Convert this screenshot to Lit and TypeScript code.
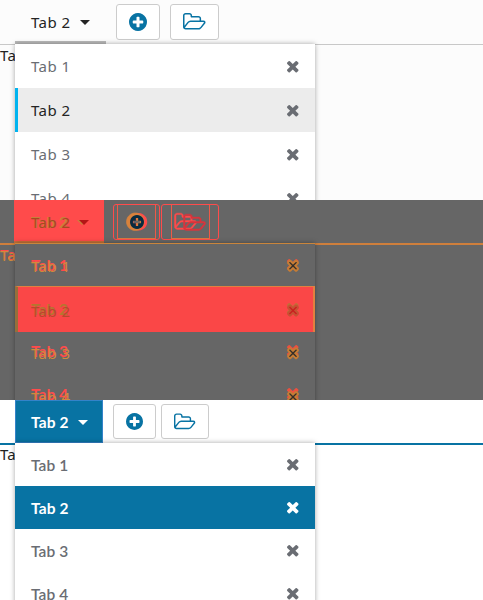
import { LitElement, html, css, svg } from "lit";
import { customElement, property } from "lit/decorators.js";

const PLUS = "M1344 960v-128q0-26-19-45t-45-19h-256v-256q0-26-19-45t-45-19h-128q-26 0-45 19t-19 45v256h-256q-26 0-45 19t-19 45v128q0 26 19 45t45 19h256v256q0 26 19 45t45 19h128q26 0 45-19t19-45v-256h256q26 0 45-19t19-45zm320-64q0 209-103 385.500t-279.500 279.500-385.500 103-385.500-103-279.500-279.500-103-385.500 103-385.500 279.500-279.500 385.500-103 385.500 103 279.500 279.500 103 385.500z";
const FOLDER = "M1845 931q0-35-53-35h-1088q-40 0-85.500 21.500t-71.500 52.500l-294 363q-18 24-18 40 0 35 53 35h1088q40 0 86-22t71-53l294-363q18-22 18-39zm-1141-163h768v-160q0-40-28-68t-68-28h-576q-40 0-68-28t-28-68v-64q0-40-28-68t-68-28h-320q-40 0-68 28t-28 68v853l256-315q44-53 116-87.500t140-34.500zm1269 163q0 62-46 120l-295 363q-43 53-116 87.500t-140 34.500h-1088q-92 0-158-66t-66-158v-960q0-92 66-158t158-66h320q92 0 158 66t66 158v32h544q92 0 158 66t66 158v160h192q54 0 99 24.500t67 70.500q15 32 15 68z";
const CLOSE = "M1490 1322q0 40-28 68l-136 136q-28 28-68 28t-68-28l-294-294-294 294q-28 28-68 28t-68-28l-136-136q-28-28-28-68t28-68l294-294-294-294q-28-28-28-68t28-68l136-136q28-28 68-28t68 28l294 294 294-294q28-28 68-28t68 28l136 136q28 28 28 68t-28 68l-294 294 294 294q28 28 28 68z";

const boxes = { plus: "128 128 1536 1536", folder: "64 256 1909 1280", close: "302 366 1188 1188" };
const paths = { plus: PLUS, folder: FOLDER, close: CLOSE };
type Icon = keyof typeof paths;

const glyph = (name: Icon, layer = "") =>
  html`<svg class="icon ${name} ${layer}" viewBox=${boxes[name]}>${svg`<path d=${paths[name]} />`}</svg>`;

@customElement("tab-panel")
export class TabPanel extends LitElement {
  @property() theme = "light";

  static styles = css`
    :host { display: block; height: 200px; overflow: hidden; font: 15px "Noto Sans", "Open Sans", sans-serif; }
    .panel { display: grid; grid-template-rows: var(--bar) 1fr; height: 200px; }
    .bar { display: flex; align-items: flex-start; box-sizing: border-box; padding-left: 15px; }
    .tab { display: flex; align-items: center; box-sizing: border-box; height: var(--tab-h); width: var(--tab-w); padding-left: 16px; color: var(--tab-ink); }
    .stack { display: inline-grid; align-items: center; justify-items: start; }
    .stack.center { justify-items: center; }
    .stack > * { grid-area: 1 / 1; }
    .caret { width: 0; height: 0; border: 5.5px solid transparent; border-top: 5px solid currentColor; border-bottom: 0; margin-left: var(--caret-gap); margin-top: 1px; }
    .btn { display: flex; align-items: center; justify-content: center; box-sizing: border-box; height: 36px; margin-top: 4px; border: 1px solid #ccc; border-radius: 3px; background: #fff; color: #0873a3; }
    .icon { display: block; fill: currentColor; overflow: visible; }
    .icon.plus { width: var(--plus); height: var(--plus); }
    .icon.folder { width: var(--folder); height: 16px; }
    .icon.close { width: 11.5px; height: 11.5px; }
    .body { display: grid; grid-template-columns: 15px 300px 1fr; }
    .edge { height: 27px; overflow: hidden; white-space: nowrap; border-top: var(--rule-w) solid var(--rule); color: #222; line-height: 20px; box-sizing: border-box; }
    .rest { border-top: var(--rule-w) solid var(--rule); }
    .menu { background: var(--menu); box-shadow: 0 0 5px rgba(0, 0, 0, .35); color: #6a6d73; z-index: 1; }
    .row { display: flex; align-items: center; justify-content: space-between; box-sizing: border-box; height: var(--row); padding: 0 16.5px 0 16px; }
    .label { line-height: 20px; letter-spacing: var(--track); white-space: nowrap; }

    .light { --bar: 44px; --tab-h: 44px; --tab-w: 91px; --tab-ink: #242424; --caret-gap: 9.5px; --plus: 18px; --folder: 22.5px; --rule-w: 1px; --rule: #c8c8c8; --menu: #fff; --row: 44px; --track: .45px; background: #fcfcfc; }
    .light .tab { border-bottom: 3px solid #bababa; padding-top: 3px; }
    .light .b1 { width: 44px; margin-left: 10px; }
    .light .b2 { width: 49px; margin-left: 10px; }
    .light .row .icon { margin-top: 1px; }
    .light .row .label { margin-top: -1px; }
    .light .on { background: #ececec; border-left: 3px solid #00b3ef; padding-left: 13px; color: #242424; }
    .light .on .icon { color: #6a6d73; }

    .blue { --bar: 43px; --tab-h: 43px; --tab-w: 88px; --tab-ink: #fff; --caret-gap: 9px; --plus: 17px; --folder: 21.3px; --rule-w: 2px; --rule: #0873a3; --menu: #fff; --row: 43px; --track: .1px; background: #fff; }
    .blue .tab { background: #0873a3; border: 1px solid #3483c9; padding-left: 15px; }
    .blue .btn { height: 35px; }
    .blue .b1 { width: 43px; margin-left: 10px; }
    .blue .b2 { width: 48px; margin-left: 5px; }
    .blue .label { font-family: Lato, "Noto Sans", sans-serif; font-size: 15.5px; font-weight: 600; }
    .blue .edge { line-height: 18px; }
    .blue .edge .label { font: 15px/18px "Noto Sans", sans-serif; }
    .blue .on .label, .blue .tab .label { font-weight: 700; }
    .blue .on { background: #0873a3; color: #fff; }

    .diff { --bar: 43px; --tab-h: 43px; --tab-w: 90px; --tab-ink: #b36022; --caret-gap: 8px; --plus: 17.5px; --folder: 22px; --rule-w: 2px; --rule: #cf7f3c; --menu: #666; --row: 43px; --track: .45px; background: #666; }
    .diff .bar { padding-left: 14px; }
    .diff .tab { padding-left: 17px; background: #ff4b4b; border-bottom: 2px solid #c57038; padding-top: 2px; }
    .diff .caret { color: #b41515; border-top-color: #b41515; filter: drop-shadow(-1.5px 0 0 #c8823c); }
    .diff .btn { background: none; border-color: #ff4b4b; }
    .diff .b1 { width: 47px; margin-left: 9px; }
    .diff .b2 { width: 58px; margin-left: 1px; }
    .diff .inner { display: flex; align-items: center; justify-content: center; height: 34px; box-sizing: border-box; border: solid #ee5946; border-width: 0 1px 1px; border-bottom-color: #d9783f; }
    .diff .b1 .inner { width: 39px; }
    .diff .b2 .inner { width: 39px; }
    .diff .menu { border-top: 1px solid #c9853b; margin-bottom: -1px; }
    .diff .row { transform: translateY(-1px); }
    .diff .on { height: 46px; margin-bottom: -3px; background: #fa4747; border: solid #e2803f; border-width: 1px 2px 0 3px; border-left-color: #956f3b; padding: 0 14.5px 2px 13px; }
    .label.under { color: #ff4b4b; font-family: Lato, sans-serif; font-size: 15.5px; font-weight: 700; letter-spacing: 0; }
    .label.over { color: #d08a3d; transform: translateY(var(--drift)); }
    .edge .label.under { font: 15px/20px "Noto Sans", sans-serif; transform: translateY(-1px); }
    .icon.folder.under { fill: #ff4b4b; stroke: #ff4b4b; stroke-width: 40; transform: translateX(-4.5px); }
    .icon.folder.over { fill: #d9343c; stroke: #d9343c; stroke-width: 40; transform: translate(4.5px, 1px); }
    .icon.plus.under { fill: #d8823c; stroke: #d8823c; stroke-width: 60; transform: translateX(-1.5px); }
    .icon.plus.base { fill: #ff4b4b; transform: translateX(1.75px); }
    .icon.plus.over { fill: #082b40; width: 14px; height: 14px; transform: translateX(0); }
    .icon.close.under { fill: #ed503f; }
    .icon.close.over { width: 10px; height: 10px; transform: translate(0, var(--drift)); fill: #342e29; stroke: #c57c35; stroke-width: 220; }
    .on .icon.close.under { fill: #bd7337; }
    .on .icon.close.over { fill: #c91f1f; stroke: #c75033; }
    .on .label.under { color: #b7752f; }
    .on .label.over { color: #b9482c; }
    .tab .label.over { color: #a94722; }
    .tab .label.under { color: #c5803a; }
  `;

  private get diff() { return this.theme === "diff"; }

  private text(t: string) {
    return this.diff
      ? html`<span class="stack"><span class="label under">${t}</span><span class="label over" aria-hidden="true">${t}</span></span>`
      : html`<span class="label">${t}</span>`;
  }

  private icon(n: Icon) {
    return this.diff
      ? html`<span class="stack center">${n === "plus" ? glyph(n, "base") : ""}${glyph(n, "under")}${glyph(n, "over")}</span>`
      : glyph(n);
  }

  private button(n: Icon, cls: string) {
    return html`<div class="btn ${cls}">${this.diff ? html`<div class="inner">${this.icon(n)}</div>` : this.icon(n)}</div>`;
  }

  render() {
    return html`<div class="panel ${this.theme}">
      <div class="bar">
        <div class="tab" style="--drift:0px">${this.text("Tab 2")}<span class="caret"></span></div>
        ${this.button("plus", "b1")}${this.button("folder", "b2")}
      </div>
      <div class="body">
        <div class="edge" style="--drift:0px">${this.text("Ta")}</div>
        <div class="menu">
          ${[1, 2, 3, 4].map((n) => html`<div class="row ${n === 2 ? "on" : ""}" style="--drift:${n * 0.75}px">${this.text(`Tab ${n}`)}${this.icon("close")}</div>`)}
        </div>
        <div class="rest"></div>
      </div>
    </div>`;
  }
}

@customElement("app-root")
export class AppRoot extends LitElement {
  static styles = css`:host { display: block; width: 483px; height: 600px; overflow: hidden; }`;
  render() {
    return html`<tab-panel theme="light"></tab-panel><tab-panel theme="diff"></tab-panel><tab-panel theme="blue"></tab-panel>`;
  }
}
